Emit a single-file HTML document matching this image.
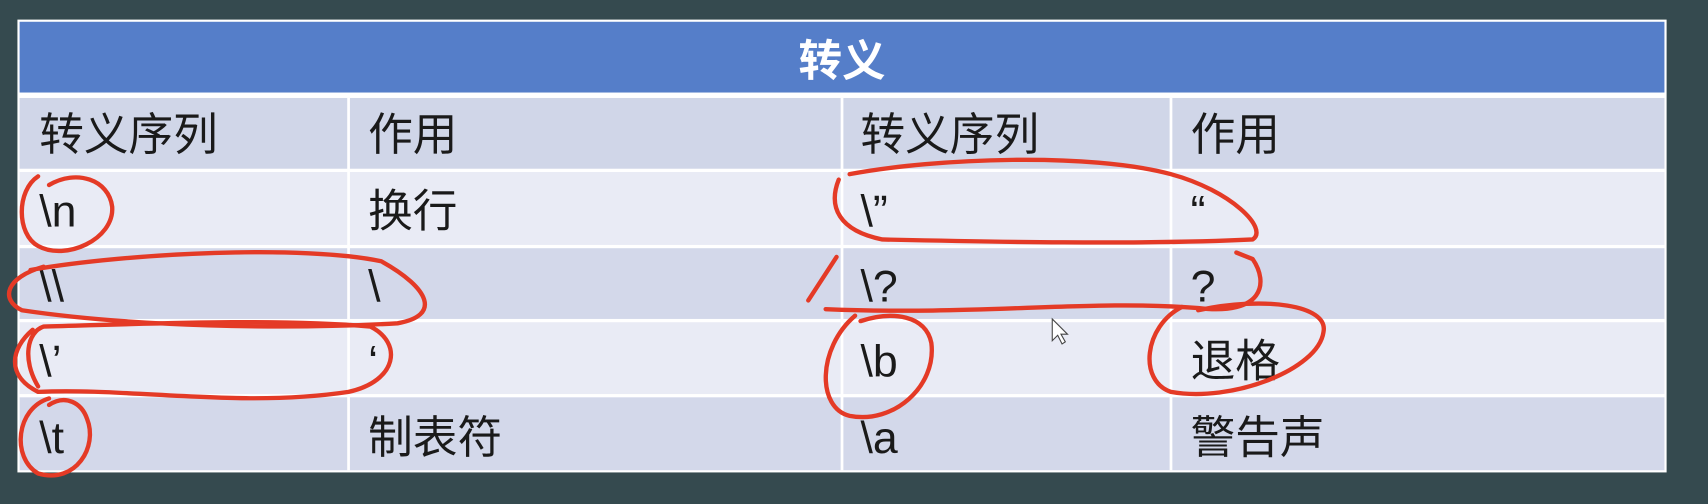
<!DOCTYPE html>
<html><head><meta charset="utf-8"><style>
html,body{margin:0;padding:0;background:#354a4f;width:1708px;height:504px;overflow:hidden}
svg{display:block}
text{font-family:"Liberation Sans","Noto Sans CJK SC",sans-serif;fill:#1a1a1a;font-size:41px}
</style></head><body>
<svg width="1708" height="504" viewBox="0 0 1568 463" preserveAspectRatio="none">
<rect x="0" y="0" width="1568" height="463" fill="#354a4f"/>
<rect x="16" y="18" width="1514" height="416" fill="#ffffff"/>
<rect x="18" y="20" width="1510" height="65" fill="#557ec9"/>
<rect x="18" y="90" width="1510" height="65" fill="#d0d6e8"/>
<rect x="18" y="158" width="1510" height="67" fill="#e9ebf5"/>
<rect x="18" y="228" width="1510" height="65" fill="#d3d8ea"/>
<rect x="18" y="296" width="1510" height="66" fill="#e9ebf5"/>
<rect x="18" y="365" width="1510" height="67" fill="#d3d8ea"/>
<g stroke="#ffffff" stroke-width="2.5">
<line x1="320" y1="90" x2="320" y2="432"/>
<line x1="773" y1="90" x2="773" y2="432"/>
<line x1="1075" y1="90" x2="1075" y2="432"/>
</g>
<text x="773" y="70" text-anchor="middle" style="fill:#fff;font-weight:bold;font-size:40px">转义</text>
<text x="36" y="138">转义序列</text><text x="338" y="138">作用</text>
<text x="790" y="138">转义序列</text><text x="1093" y="138">作用</text>
<text x="36" y="208">\n</text><text x="338" y="208">换行</text>
<text x="790" y="208">\”</text><text x="1093" y="208">“</text>
<text x="36" y="277">\\</text><text x="338" y="277">\</text>
<text x="790" y="277">\?</text><text x="1093" y="277">?</text>
<text x="36" y="346">\’</text><text x="338" y="346">‘</text>
<text x="790" y="346">\b</text><text x="1093" y="346">退格</text>
<text x="36" y="416">\t</text><text x="338" y="416">制表符</text>
<text x="790" y="416">\a</text><text x="1093" y="416">警告声</text>
<g fill="none" stroke="#e43a26" stroke-width="4" stroke-linecap="round" stroke-linejoin="round">
<path d="M35,162 C15,175 15,215 35,226 C60,240 105,220 103,190 C100,165 70,155 45,170"/>
<path d="M28,248 C120,232 280,225 350,240 C395,265 405,290 365,297 C260,303 120,300 20,285 C0,275 5,255 40,245"/>
<path d="M30,303 C10,320 5,345 35,360 C120,356 220,375 320,360 C365,350 370,315 340,300 C250,292 120,298 40,300 C25,305 20,330 35,355"/>
<path d="M45,366 C15,375 10,420 35,435 C70,445 90,410 80,385 C75,370 60,362 45,372"/>
<path d="M780,160 C860,145 1000,140 1075,160 C1130,175 1165,210 1150,220 C1050,225 900,222 810,220 C770,212 760,190 770,165"/>
<path d="M742,276 L768,236"/>
<path d="M758,284 C900,290 1000,275 1100,283 C1160,290 1165,260 1150,238 L1135,232"/>
<path d="M785,290 C750,320 750,375 780,382 C820,390 860,355 855,315 C850,290 820,285 790,295"/>
<path d="M1085,282 C1050,300 1045,350 1075,360 C1130,370 1210,340 1215,305 C1220,280 1160,272 1100,285"/>
</g>
<path d="M966,293 L966,313 L971,308 L975,316 L978,314 L974,307 L980,307 Z" fill="#fff" stroke="#444" stroke-width="1"/>
</svg>
</body></html>
